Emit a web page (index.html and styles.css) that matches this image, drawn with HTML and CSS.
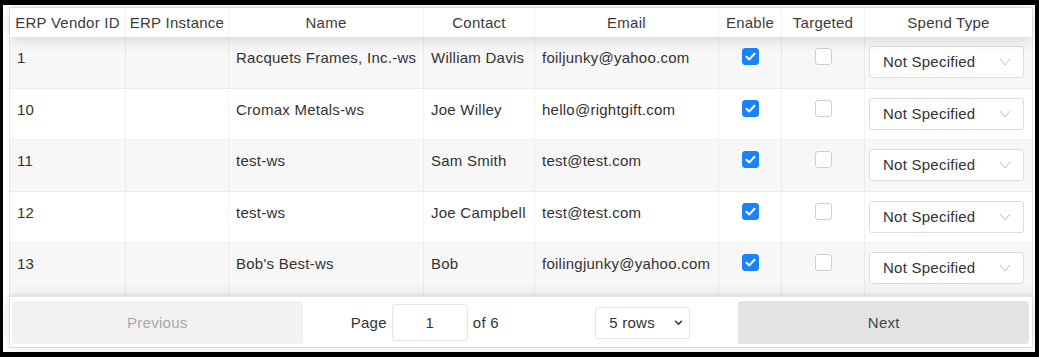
FILE: index.html
```html
<!DOCTYPE html>
<html>
<head>
<meta charset="utf-8">
<link rel="stylesheet" href="styles.css">
</head>
<body>
<div class="frame">
  <div class="table">
    <div class="thead row-grid">
      <div class="th">ERP Vendor ID</div>
      <div class="th">ERP Instance</div>
      <div class="th">Name</div>
      <div class="th">Contact</div>
      <div class="th">Email</div>
      <div class="th">Enable</div>
      <div class="th">Targeted</div>
      <div class="th last">Spend Type</div>
    </div>
    <div class="tbody">
      <div class="tr row-grid odd">
        <div class="td">1</div><div class="td"></div><div class="td">Racquets Frames, Inc.-ws</div><div class="td">William Davis</div><div class="td">foiljunky@yahoo.com</div>
        <div class="td center"><span class="cb on"><svg viewBox="0 0 17 17" width="17" height="17"><polyline points="4.5,8.8 7.3,11.4 12.5,5.8" fill="none" stroke="#fff" stroke-width="2" stroke-linecap="round" stroke-linejoin="round"/></svg></span></div>
        <div class="td center"><span class="cb"></span></div>
        <div class="td sel last"><div class="spend">Not Specified<svg viewBox="0 0 12 8" width="12" height="8"><polyline points="1,1 6,7 11,1" fill="none" stroke="#bdbdbd" stroke-width="1"/></svg></div></div>
      </div>
      <div class="tr row-grid">
        <div class="td">10</div><div class="td"></div><div class="td">Cromax Metals-ws</div><div class="td">Joe Willey</div><div class="td">hello@rightgift.com</div>
        <div class="td center"><span class="cb on"><svg viewBox="0 0 17 17" width="17" height="17"><polyline points="4.5,8.8 7.3,11.4 12.5,5.8" fill="none" stroke="#fff" stroke-width="2" stroke-linecap="round" stroke-linejoin="round"/></svg></span></div>
        <div class="td center"><span class="cb"></span></div>
        <div class="td sel last"><div class="spend">Not Specified<svg viewBox="0 0 12 8" width="12" height="8"><polyline points="1,1 6,7 11,1" fill="none" stroke="#bdbdbd" stroke-width="1"/></svg></div></div>
      </div>
      <div class="tr row-grid odd">
        <div class="td">11</div><div class="td"></div><div class="td">test-ws</div><div class="td">Sam Smith</div><div class="td">test@test.com</div>
        <div class="td center"><span class="cb on"><svg viewBox="0 0 17 17" width="17" height="17"><polyline points="4.5,8.8 7.3,11.4 12.5,5.8" fill="none" stroke="#fff" stroke-width="2" stroke-linecap="round" stroke-linejoin="round"/></svg></span></div>
        <div class="td center"><span class="cb"></span></div>
        <div class="td sel last"><div class="spend">Not Specified<svg viewBox="0 0 12 8" width="12" height="8"><polyline points="1,1 6,7 11,1" fill="none" stroke="#bdbdbd" stroke-width="1"/></svg></div></div>
      </div>
      <div class="tr row-grid">
        <div class="td">12</div><div class="td"></div><div class="td">test-ws</div><div class="td">Joe Campbell</div><div class="td">test@test.com</div>
        <div class="td center"><span class="cb on"><svg viewBox="0 0 17 17" width="17" height="17"><polyline points="4.5,8.8 7.3,11.4 12.5,5.8" fill="none" stroke="#fff" stroke-width="2" stroke-linecap="round" stroke-linejoin="round"/></svg></span></div>
        <div class="td center"><span class="cb"></span></div>
        <div class="td sel last"><div class="spend">Not Specified<svg viewBox="0 0 12 8" width="12" height="8"><polyline points="1,1 6,7 11,1" fill="none" stroke="#bdbdbd" stroke-width="1"/></svg></div></div>
      </div>
      <div class="tr row-grid odd">
        <div class="td">13</div><div class="td"></div><div class="td">Bob's Best-ws</div><div class="td">Bob</div><div class="td">foilingjunky@yahoo.com</div>
        <div class="td center"><span class="cb on"><svg viewBox="0 0 17 17" width="17" height="17"><polyline points="4.5,8.8 7.3,11.4 12.5,5.8" fill="none" stroke="#fff" stroke-width="2" stroke-linecap="round" stroke-linejoin="round"/></svg></span></div>
        <div class="td center"><span class="cb"></span></div>
        <div class="td sel last"><div class="spend">Not Specified<svg viewBox="0 0 12 8" width="12" height="8"><polyline points="1,1 6,7 11,1" fill="none" stroke="#bdbdbd" stroke-width="1"/></svg></div></div>
      </div>
    </div>
    <div class="pagination">
      <div class="side"><div class="btn disabled">Previous</div></div>
      <div class="mid">
        <span class="pageinfo">Page <span class="pageinput">1</span> of 6</span>
        <span class="sizesel">5 rows<svg viewBox="0 0 10 7" width="9" height="6"><polyline points="1.5,1.5 5,5 8.5,1.5" fill="none" stroke="#333" stroke-width="1.8" stroke-linecap="round" stroke-linejoin="round"/></svg></span>
      </div>
      <div class="side"><div class="btn">Next</div></div>
    </div>
  </div>
</div>
</body>
</html>
```
FILE: styles.css
```css
html, body {
  margin: 0;
  padding: 0;
  background: #000;
}
body {
  font-family: "Liberation Sans", Arial, sans-serif;
  font-size: 15px;
  letter-spacing: 0.25px;
  color: #333;
}
.frame {
  background: #fff;
  margin: 5px 4px 5px 3px;
  padding: 2px 2px 4px 6px;
  height: 341px;
}
.table {
  border: 1px solid rgba(0,0,0,0.1);
  height: 339px;
  display: flex;
  flex-direction: column;
}
.row-grid {
  display: grid;
  grid-template-columns: 116px 103px 195px 111px 184px 63px 83px 1fr;
}
.thead {
  height: 29px;
  position: relative;
  z-index: 2;
  box-shadow: 0 2px 15px 0 rgba(0,0,0,0.15);
  background: #fff;
}
.th {
  border-right: 1px solid rgba(0,0,0,0.05);
  text-align: center;
  line-height: 29px;
  color: #3b3b3b;
  white-space: nowrap;
  overflow: hidden;
}
.th.last, .td.last { border-right: none; }
.tbody {
  display: flex;
  flex-direction: column;
}
.tr {
  height: 51.6px;
  box-sizing: border-box;
  border-bottom: 1px solid rgba(0,0,0,0.05);
}
.tr.odd { background: rgba(0,0,0,0.03); }
.td {
  border-right: 1px solid rgba(0,0,0,0.05);
  padding: 12px 7px 0 7px;
  line-height: 18px;
  white-space: nowrap;
  overflow: hidden;
}
.td.center {
  display: flex;
  justify-content: center;
  padding-top: 11px;
}
.cb {
  width: 17px;
  height: 17px;
  box-sizing: border-box;
  border-radius: 3px;
  border: 1px solid #cfcfcf;
  background: #fff;
  display: block;
}
.cb.on {
  background: #1a82fb;
  border-color: #1a82fb;
}
.cb.on svg { display: block; margin: -1px; }
.td.sel {
  padding: 9px 8px 0 4px;
}
.spend {
  height: 32px;
  box-sizing: border-box;
  border: 1px solid #dcdcdc;
  border-radius: 3px;
  background: #fff;
  display: flex;
  align-items: center;
  justify-content: space-between;
  padding: 0 12px 0 13px;
  color: #333;
}
.pagination {
  margin-top: auto;
  position: relative;
  z-index: 2;
  background: #fff;
  border-top: 2px solid rgba(0,0,0,0.1);
  box-shadow: 0 0 15px 0 rgba(0,0,0,0.1);
  padding: 3px 3px 3px 2px;
  display: flex;
  align-items: center;
  height: 44px;
}
.side { flex: 1; display: flex; }
.mid {
  flex: 1.5;
  display: flex;
  justify-content: space-around;
  align-items: center;
}
.btn {
  width: 100%;
  height: 43px;
  border-radius: 3px;
  display: flex;
  align-items: center;
  justify-content: center;
  background: #e4e4e4;
  color: #444;
}
.btn.disabled {
  background: #f2f2f2;
  color: #a8a8a8;
}
.pageinfo {
  display: flex;
  align-items: center;
  color: #333;
}
.pageinput {
  display: inline-flex;
  align-items: center;
  justify-content: center;
  width: 76px;
  height: 37px;
  box-sizing: border-box;
  border: 1px solid rgba(0,0,0,0.1);
  border-radius: 3px;
  margin: 0 5px 0 5px;
}
.sizesel {
  display: flex;
  align-items: center;
  justify-content: space-between;
  width: 95px;
  height: 32px;
  box-sizing: border-box;
  border: 1px solid rgba(0,0,0,0.1);
  border-radius: 3px;
  padding: 0 6px 0 13px;
  margin-top: 1px;
}
```
